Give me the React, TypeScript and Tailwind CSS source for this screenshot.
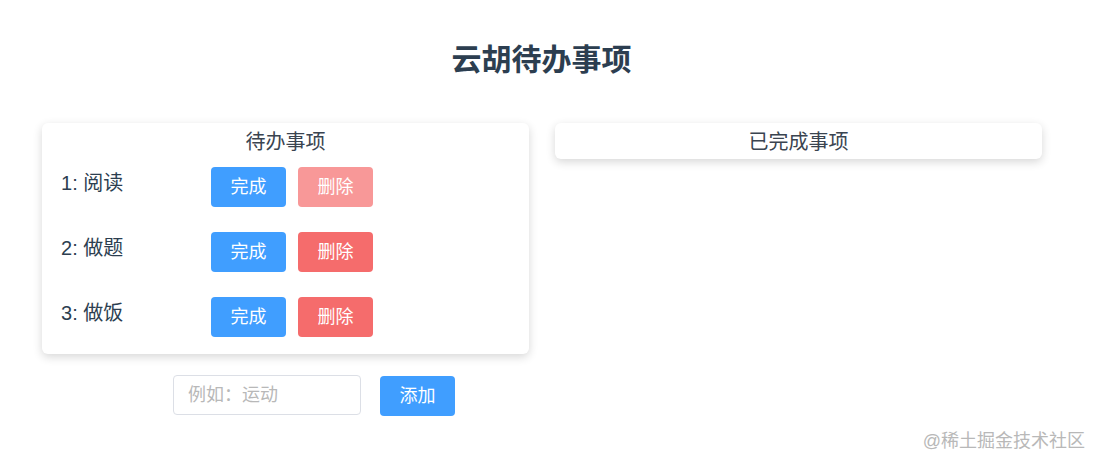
import React from "react";

const FONT = {
  fontFamily:
    '"Liberation Sans", "Noto Sans CJK SC", sans-serif',
};

const items = [
  { id: 1, name: "阅读", faded: true },
  { id: 2, name: "做题", faded: false },
  { id: 3, name: "做饭", faded: false },
];

export default function App() {
  return (
    <div
      className="relative w-[1100px] h-[469px] bg-white text-[#2c3e50]"
      style={FONT}
    >
      <h1 className="pt-[39px] pr-[17px] text-center text-[30px] leading-[42px] font-bold">
        云胡待办事项
      </h1>

      <div className="mt-[42px] flex gap-[26px] pl-[42px]">
        <div className="w-[487px]">
          <div className="rounded-md bg-white pb-[17px] shadow-[0_3px_10px_rgba(0,0,0,0.16)]">
            <div className="h-[36px] text-center text-[20px] leading-[38px] text-[#3a4450]">
              待办事项
            </div>
            <div className="mt-[8px] flex flex-col gap-[25px]">
              {items.map((it) => (
                <div key={it.id} className="flex items-start pl-[19px]">
                  <div className="w-[150px] text-[20px] leading-[32px]">
                    {it.id}: {it.name}
                  </div>
                  <button className="h-[40px] w-[75px] rounded-[4px] bg-[#409eff] text-[18px] text-white">
                    完成
                  </button>
                  <button
                    className={`ml-[12px] h-[40px] w-[75px] rounded-[4px] text-[18px] text-white ${
                      it.faded ? "bg-[#f89898]" : "bg-[#f56c6c]"
                    }`}
                  >
                    删除
                  </button>
                </div>
              ))}
            </div>
          </div>

          <div className="mt-[21px] flex items-start pl-[131px]">
            <input
              className="h-[40px] w-[188px] rounded-[4px] border border-[#dcdfe6] px-[14px] text-[18px] outline-none placeholder:text-[#b8b8b8]"
              placeholder="例如：运动"
              style={FONT}
            />
            <button className="ml-[19px] mt-[1px] h-[40px] w-[75px] rounded-[4px] bg-[#409eff] text-[18px] text-white">
              添加
            </button>
          </div>
        </div>

        <div className="w-[487px]">
          <div className="h-[36px] rounded-md bg-white text-center text-[20px] leading-[38px] text-[#3a4450] shadow-[0_3px_10px_rgba(0,0,0,0.16)]">
            已完成事项
          </div>
        </div>
      </div>

      <div className="absolute right-[15px] top-[428px] text-[18px] text-[#b8b8b8]">
        @稀土掘金技术社区
      </div>
    </div>
  );
}
